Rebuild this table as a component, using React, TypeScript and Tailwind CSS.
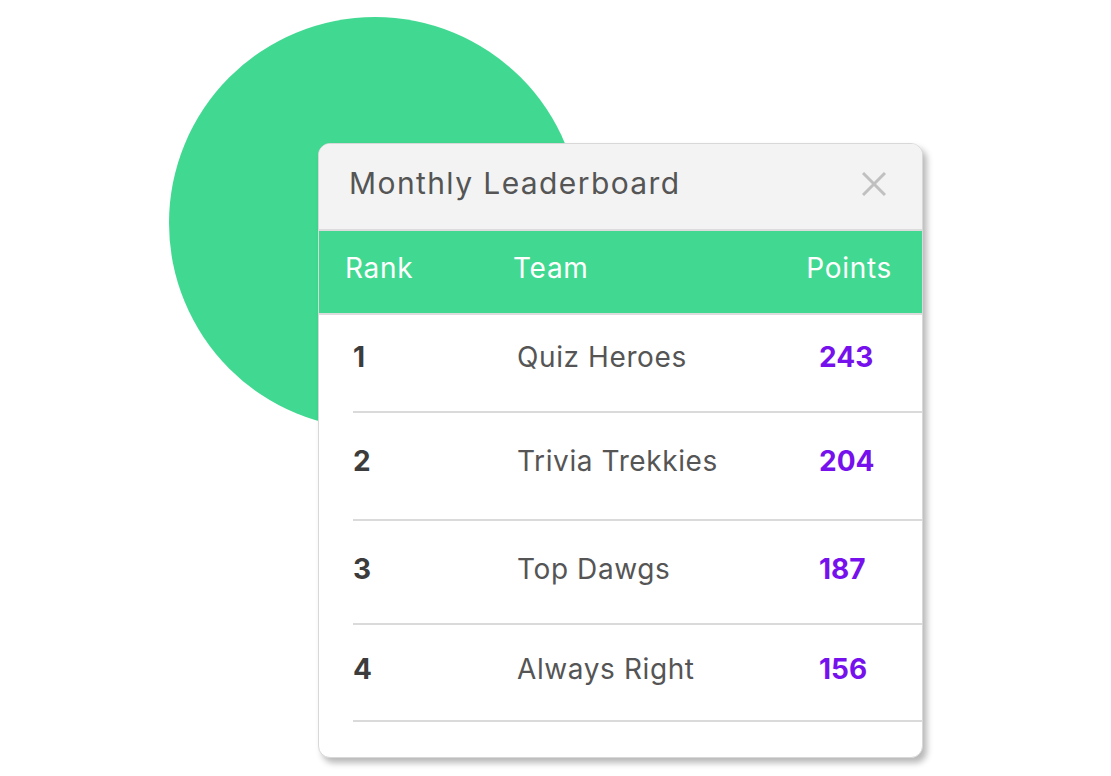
const rows = [
  { rank: 1, team: 'Quiz Heroes', points: 243, cls: 'h-[96px] pb-[12px]' },
  { rank: 2, team: 'Trivia Trekkies', points: 204, cls: 'h-[106px] pb-[10px]' },
  { rank: 3, team: 'Top Dawgs', points: 187, cls: 'h-[102px] pb-[6px]' },
  { rank: 4, team: 'Always Right', points: 156, cls: 'h-[95px] pb-[8px]' },
]

function CloseIcon() {
  return (
    <svg width="24" height="24" viewBox="0 0 24 24" fill="none" stroke="#c0c0c0" strokeWidth="3">
      <path d="M1 1 L23 23 M23 1 L1 23" />
    </svg>
  )
}

export default function App() {
  return (
    <div
      className="relative h-[776px] w-[1111px] overflow-hidden bg-white"
      style={{ fontFamily: 'Inter, "Noto Sans", sans-serif' }}
    >
      {/* decorative circle behind the card */}
      <div className="absolute left-[169px] top-[17px] h-[412px] w-[412px] rounded-full bg-[#41d991]" />

      <div className="relative ml-[318px] pt-[143px]">
        <div className="w-[605px] overflow-hidden rounded-[12px] border border-[#d8d8d8] bg-white shadow-[4px_5px_6px_rgba(0,0,0,0.28)]">
          <div className="flex h-[85px] items-center justify-between bg-[#f3f3f3] pb-[6px] pl-[30px] pr-[36px]">
            <span className="text-[30px] tracking-[1.4px] text-[#555555]">Monthly Leaderboard</span>
            <CloseIcon />
          </div>

          <div className="flex h-[86px] items-center border-y-2 border-[#dcdcdc] bg-[#41d991] pb-[8px] pl-[26px] pr-[30px] text-[28px] tracking-[0.7px] text-white">
            <span className="w-[168px]">Rank</span>
            <span className="flex-1">Team</span>
            <span>Points</span>
          </div>

          <div className="pb-[35px]">
            {rows.map((r) => (
              <div key={r.rank} className="pl-[34px]">
                <div className={`grid ${r.cls} grid-cols-[164px_302px_1fr] items-center text-[28px]`}>
                  <span className="font-bold text-[#3c3c3c]">{r.rank}</span>
                  <span className="tracking-[0.6px] text-[#555555]">{r.team}</span>
                  <span className="font-bold text-[#7611ee]">{r.points}</span>
                </div>
                <div className="h-[2px] bg-[#dadada]" />
              </div>
            ))}
          </div>
        </div>
      </div>
    </div>
  )
}
